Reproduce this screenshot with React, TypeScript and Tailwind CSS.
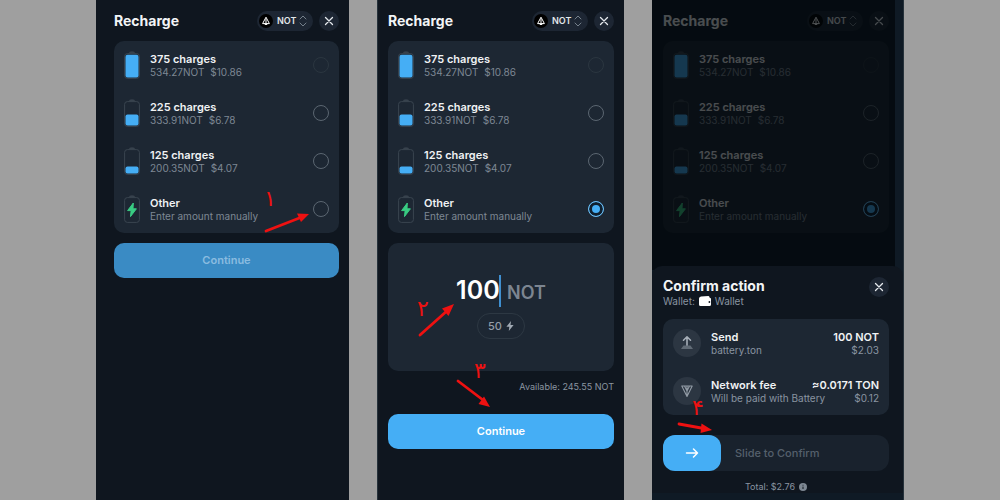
import { useState } from 'react';
import type { ReactNode } from 'react';
import clsx from 'clsx';

// ─── Data ─────────────────────────────────────────────────────────────────────

interface Pack {
  id: string;
  title: string;
  amount: string;
  price?: string;
  level: 'full' | 'half' | 'low' | 'custom';
  disabled?: boolean;
}

const PACKS: Pack[] = [
  { id: '375', title: '375 charges', amount: '534.27NOT', price: '$10.86', level: 'full', disabled: true },
  { id: '225', title: '225 charges', amount: '333.91NOT', price: '$6.78', level: 'half' },
  { id: '125', title: '125 charges', amount: '200.35NOT', price: '$4.07', level: 'low' },
  { id: 'other', title: 'Other', amount: 'Enter amount manually', level: 'custom' },
];

// ─── Icons ────────────────────────────────────────────────────────────────────

function BatteryIcon({ level }: { level: Pack['level'] }) {
  return (
    <svg viewBox="0 0 16 28" className="h-7 w-4 shrink-0" fill="none">
      <path d="M5 1.8Q5 .6 8 .6t3 1.2z" fill="#414c57" />
      <rect x="0.6" y="2.6" width="14.8" height="24.8" rx="2.8" stroke="#3a4550" strokeWidth="1" />
      {level === 'full' && <rect x="1.5" y="3.8" width="13" height="22.6" rx="2" fill="#45aef5" />}
      {level === 'half' && <rect x="1.5" y="15.6" width="13" height="10.8" rx="2" fill="#45aef5" />}
      {level === 'low' && <rect x="1.5" y="19.6" width="13" height="6.8" rx="2" fill="#45aef5" />}
      {level === 'custom' && (
        <path d="M9.3 8 3.6 15.6h3.5L6.5 21.6l5.9-7.8H9z" fill="#39cc83" stroke="#39cc83" strokeWidth="1" strokeLinejoin="round" />
      )}
    </svg>
  );
}

function NotIcon() {
  return (
    <svg viewBox="0 0 14 14" className="h-3.5 w-3.5 shrink-0" fill="none">
      <circle cx="7" cy="7" r="7" fill="#000" />
      <path d="M7 3.2 3.6 9.6h6.8zM7 5v5M5.2 9.600 7 10.800l1.800-1.200" stroke="#fff" strokeWidth="1" strokeLinejoin="round" />
    </svg>
  );
}

function CloseButton() {
  return (
    <button aria-label="Close" className="flex h-5 w-5 shrink-0 items-center justify-center rounded-full bg-[#1d2633]">
      <svg viewBox="0 0 10 10" className="h-2.5 w-2.5" fill="none">
        <path d="m1.5 1.5 7 7m0-7-7 7" stroke="#e6eaee" strokeWidth="1.3" strokeLinecap="round" />
      </svg>
    </button>
  );
}

function Bolt() {
  return (
    <svg viewBox="0 0 8 10" className="h-2.5 w-2" fill="#a0a9b3">
      <path d="M5 0 .4 5.8h2.9L2.8 10l4.8-6H4.5z" />
    </svg>
  );
}

// ─── Shared parts ─────────────────────────────────────────────────────────────

function Header() {
  return (
    <header className="flex h-[41px] items-center gap-1.5">
      <h1 className="flex-1 text-[14px] font-bold text-[#f2f4f6]">Recharge</h1>
      <div className="relative flex h-5 items-center rounded-full bg-[#1d2633] pl-[2px]">
        <NotIcon />
        <select
          aria-label="Token"
          className="w-[40px] appearance-none bg-transparent pl-1 text-[9px] font-semibold text-[#e3e7ea] outline-none"
        >
          <option>NOT</option>
        </select>
        <svg viewBox="0 0 8 12" className="pointer-events-none absolute right-1.5 h-3 w-2" fill="none">
          <path d="M1 4 4 1l3 3M1 8l3 3 3-3" stroke="#75808b" strokeWidth="1" strokeLinecap="round" strokeLinejoin="round" />
        </svg>
      </div>
      <CloseButton />
    </header>
  );
}

function PackList({ name, initial }: { name: string; initial?: string }) {
  const [selected, setSelected] = useState(initial);

  return (
    <div className="rounded-[10px] bg-[#1d2733]">
      {PACKS.map((pack) => (
        <label key={pack.id} className="flex h-12 items-center gap-2.5 px-2.5">
          <BatteryIcon level={pack.level} />
          <span className="flex-1">
            <span className="block text-[11px] leading-[14px] font-semibold text-[#f0f2f4]">{pack.title}</span>
            <span className="flex gap-1.5 text-[10px] leading-[13px] text-[#7e8894]">
              <span>{pack.amount}</span>
              {pack.price && <span>{pack.price}</span>}
            </span>
          </span>
          <input
            type="radio"
            name={name}
            checked={selected === pack.id}
            disabled={pack.disabled}
            onChange={() => setSelected(pack.id)}
            className="h-4 w-4 shrink-0 appearance-none rounded-full border border-[#5b6671] checked:border-[#6cbcf2] checked:bg-[#45aef5] checked:shadow-[inset_0_0_0_3px_#10202f] disabled:border-[#2b3640]"
          />
        </label>
      ))}
    </div>
  );
}

interface StepMarkProps {
  digit: string;
  digitClass: string;
  line: string;
  head: string;
}

// Red pen marks over the screens, numbered in Persian digits
function StepMark({ digit, digitClass, line, head }: StepMarkProps) {
  return (
    <div className="pointer-events-none absolute inset-0 z-20">
      <svg className="h-full w-full" fill="none">
        <path d={line} stroke="#ee1111" strokeWidth="2.8" strokeLinecap="round" />
        <path d={head} fill="#ee1111" />
      </svg>
      <span className={clsx("absolute font-['DejaVu_Sans',sans-serif] text-[22px] leading-5 text-[#ee1111]", digitClass)}>
        {digit}
      </span>
    </div>
  );
}

function FeeRow({ icon, title, note, value, fiat }: { icon: ReactNode; title: string; note: string; value: string; fiat: string }) {
  return (
    <div className="flex h-12 items-center gap-2.5 px-2.5">
      <span className="flex h-7 w-7 shrink-0 items-center justify-center rounded-full bg-[#2c3642]">{icon}</span>
      <div className="flex-1">
        <div className="flex justify-between text-[11px] leading-[14px] font-semibold text-[#f0f2f4]">
          <span>{title}</span>
          <span>{value}</span>
        </div>
        <div className="flex justify-between text-[10px] leading-[13px] text-[#8994a1]">
          <span className="whitespace-nowrap">{note}</span>
          <span>{fiat}</span>
        </div>
      </div>
    </div>
  );
}

// ─── Screens ──────────────────────────────────────────────────────────────────

function PickScreen() {
  return (
    <section className="relative bg-[#0f161f] pr-2.5 pl-[18px]">
      <Header />
      <PackList name="pick" />
      <button className="mt-2.5 h-[35px] w-full rounded-[10px] bg-[#3a8bc4] text-[11px] font-semibold text-[#8abce0]">Continue</button>
      <StepMark
        digit="۱"
        digitClass="top-[189px] left-[168px]"
        line="M170 231 206 217"
        head="M213 214 201 213.5 205 222z"
      />
    </section>
  );
}

function AmountScreen() {
  const [amount, setAmount] = useState('100');

  return (
    <section className="relative border-l border-[#26323b] bg-[#0f161f] px-2.5">
      <Header />
      <PackList name="amount" initial="other" />
      <div className="mt-2.5 flex h-32 flex-col items-center justify-center gap-1.5 rounded-[10px] bg-[#1d2733]">
        <label className="flex items-baseline gap-1.5">
          <input
            aria-label="Amount"
            value={amount}
            onChange={(e) => setAmount(e.target.value)}
            className="h-8 w-[45px] border-r-2 border-[#3f8fd0] bg-transparent text-right text-[25px] font-semibold text-white outline-none"
          />
          <span className="text-[18px] font-semibold text-[#7c8591]">NOT</span>
        </label>
        <button className="flex h-[26px] items-center gap-1 rounded-full border border-[#2d3843] px-2.5 text-[11px] font-medium text-[#949da8]">
          50 <Bolt />
        </button>
      </div>
      <p className="mt-2 text-right text-[9px] leading-4 text-[#8b95a1]">Available: 245.55 NOT</p>
      <button className="mt-[19px] h-[35px] w-full rounded-[10px] bg-[#45aef5] text-[11px] font-semibold text-white">Continue</button>
      <StepMark
        digit="۲"
        digitClass="top-[299px] left-[39px]"
        line="M42 335 70 310"
        head="M76 304 64 308.5 70.5 316z"
      />
      <StepMark
        digit="۳"
        digitClass="top-[361px] left-[96px]"
        line="M80 381 105 400"
        head="M112 407 106 396.5 100.5 404z"
      />
    </section>
  );
}

function ConfirmScreen() {
  return (
    <section className="relative border-r border-[#26323b] bg-[#0f1a25]">
      <div className="relative h-[270px] pr-3.5 pl-[11px]">
        <Header />
        <PackList name="confirm" initial="other" />
        {/* dimmed page behind the sheet */}
        <div className="absolute inset-y-0 right-2 left-0 bg-[#020508]/70" />
      </div>
      <div className="relative -mt-1 rounded-t-[10px] bg-[#0f161f] pt-[11px] pr-3.5 pl-[11px]">
        <div className="flex items-start justify-between">
          <div>
            <h2 className="text-[14px] leading-[18px] font-bold text-[#f2f4f6]">Confirm action</h2>
            <p className="flex items-center gap-1 text-[10px] leading-3 text-[#8994a1]">
              Wallet:
              <svg viewBox="0 0 12 10" className="h-2.5 w-3">
                <path d="M2 .5 9.5 0q1 0 1 1.5L12 2.500v6Q12 10 10.500 10h-9Q0 10 0 8.500v-6Q0 1 2 .5z" fill="#fff" />
                <circle cx="10.400" cy="6" r="0.9" fill="#0f161f" />
              </svg>
              Wallet
            </p>
          </div>
          <CloseButton />
        </div>
        <div className="mt-3 rounded-[10px] bg-[#1d2733]">
          <FeeRow
            title="Send"
            note="battery.ton"
            value="100 NOT"
            fiat="$2.03"
            icon={
              <svg viewBox="0 0 16 16" className="h-4 w-4" fill="none">
                <path d="M8 11.5V2M4.5 5.2 8 1.8l3.5 3.400" stroke="#a7afb8" strokeWidth="1.6" strokeLinecap="round" strokeLinejoin="round" />
                <path d="M4.5 10.5h7L14 14H2z" fill="#616b76" />
              </svg>
            }
          />
          <FeeRow
            title="Network fee"
            note="Will be paid with Battery"
            value="≈0.0171 TON"
            fiat="$0.12"
            icon={
              <svg viewBox="0 0 14 14" className="h-3.5 w-3.5" fill="none">
                <path d="M1.8 2h10.4L7 12.5zM7 2v10M4.5 2 7 7l2.5-5" stroke="#929ba5" strokeWidth="1.1" strokeLinejoin="round" />
              </svg>
            }
          />
        </div>
        <label className="relative mt-5 flex h-9 items-center gap-3.5 rounded-xl bg-[#19222d] text-[11px] font-medium text-[#55606c]">
          <span className="flex h-full w-[58px] items-center justify-center rounded-xl bg-[#45aef5]">
            <svg viewBox="0 0 14 12" className="h-3 w-3.5" fill="none">
              <path d="M1.5 6h11M8.5 2l4 4-4 4" stroke="#fff" strokeWidth="1.5" strokeLinecap="round" strokeLinejoin="round" />
            </svg>
          </span>
          Slide to Confirm
          <input type="range" defaultValue={0} className="absolute inset-0 h-full w-full opacity-0" />
        </label>
        <p className="mt-2.5 flex items-center justify-center gap-1 text-[9px] leading-3 text-[#8994a1]">
          Total: $2.76
          <svg viewBox="0 0 8 8" className="h-2 w-2">
            <circle cx="4" cy="4" r="4" fill="#7d8792" />
            <path d="M4 3.6v2.4M4 1.8v.8" stroke="#0f161f" strokeWidth="1" />
          </svg>
        </p>
      </div>
      <StepMark
        digit="۴"
        digitClass="top-[398px] left-[40px]"
        line="M27 424 52 428.5"
        head="M60 430 49.5 423.5 48.5 433z"
      />
    </section>
  );
}

export default function App() {
  return (
    <main className="grid min-h-screen grid-cols-[253fr_247fr_252fr] gap-7 bg-[#9f9f9f] px-24 font-['Inter','Liberation_Sans',sans-serif]">
      <PickScreen />
      <AmountScreen />
      <ConfirmScreen />
    </main>
  );
}
